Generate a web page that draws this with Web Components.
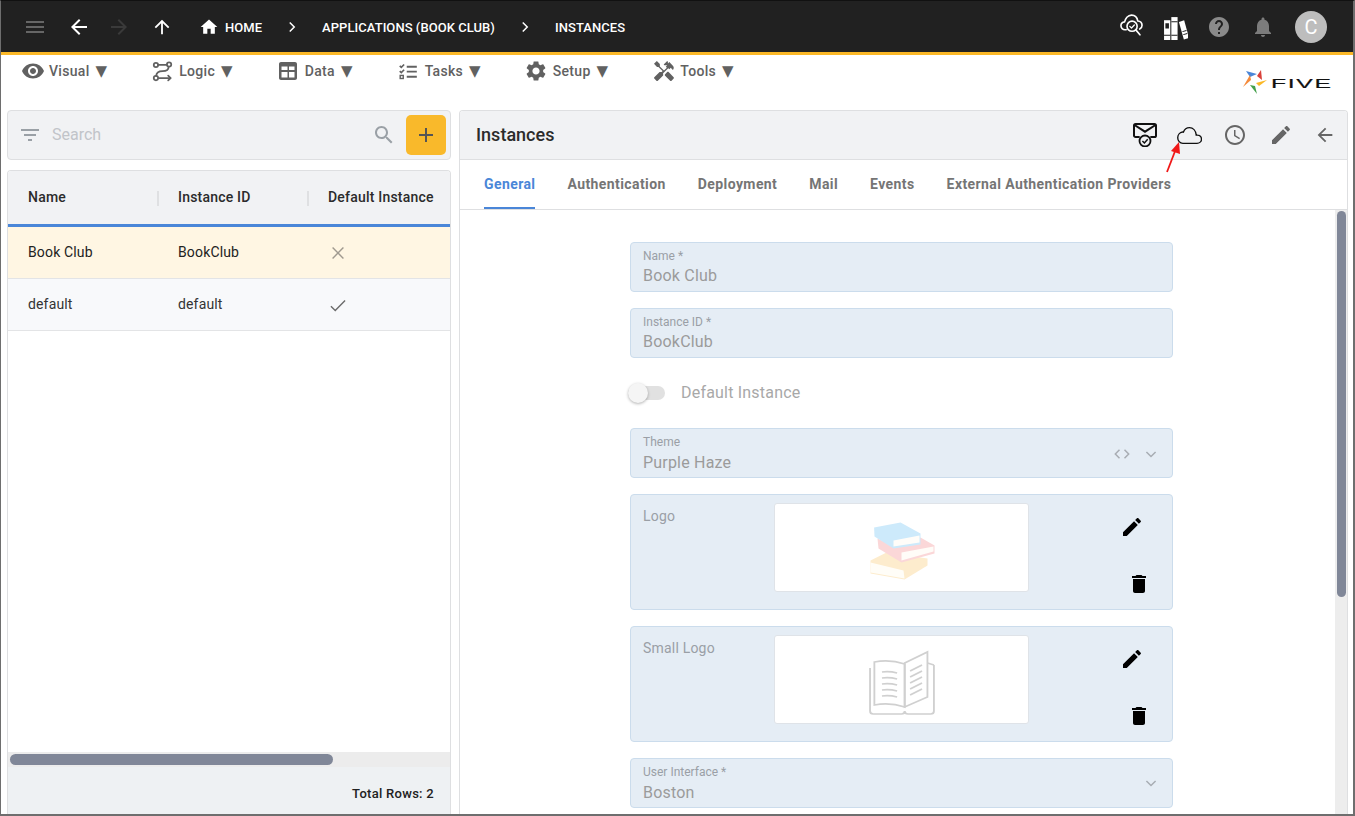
<!DOCTYPE html>
<html lang="en">
<head>
<meta charset="utf-8">
<title>Instances</title>
<style>
html,body{margin:0;padding:0;height:100%;overflow:hidden;background:#fff;font-family:Roboto,"Liberation Sans",sans-serif}
</style>
</head>
<body>
<five-app>
  <five-topbar slot="top">
    <five-crumb slot="crumbs" home>HOME</five-crumb>
    <five-crumb slot="crumbs" sep>APPLICATIONS (BOOK CLUB)</five-crumb>
    <five-crumb slot="crumbs" sep>INSTANCES</five-crumb>
  </five-topbar>
  <five-menubar slot="menu">
    <five-menu-item icon="eye" isize="24">Visual</five-menu-item>
    <five-menu-item icon="logic">Logic</five-menu-item>
    <five-menu-item icon="table" isize="24">Data</five-menu-item>
    <five-menu-item icon="tasks">Tasks</five-menu-item>
    <five-menu-item icon="gear" isize="24">Setup</five-menu-item>
    <five-menu-item icon="tools" isize="24">Tools</five-menu-item>
  </five-menubar>
  <five-search slot="left"></five-search>
  <five-grid slot="left">
    <five-grid-row selected name="Book Club" iid="BookClub" mark="close"></five-grid-row>
    <five-grid-row name="default" iid="default" mark="check"></five-grid-row>
  </five-grid>
  <five-detail slot="right" heading="Instances">
    <five-tab slot="tabs" active>General</five-tab>
    <five-tab slot="tabs">Authentication</five-tab>
    <five-tab slot="tabs">Deployment</five-tab>
    <five-tab slot="tabs">Mail</five-tab>
    <five-tab slot="tabs">Events</five-tab>
    <five-tab slot="tabs">External Authentication Providers</five-tab>
    <five-field label="Name *" value="Book Club"></five-field>
    <five-field label="Instance ID *" value="BookClub"></five-field>
    <five-toggle>Default Instance</five-toggle>
    <five-field label="Theme" value="Purple Haze" code select></five-field>
    <five-image-field label="Logo" art="books"></five-image-field>
    <five-image-field label="Small Logo" art="open"></five-image-field>
    <five-field label="User Interface *" value="Boston" select></five-field>
  </five-detail>
</five-app>
<script>
const ICONS={
 menu:'<path d="M3 18h18v-2H3v2zm0-5h18v-2H3v2zm0-7v2h18V6H3z"/>',
 back:'<path d="M20 11H7.83l5.59-5.59L12 4l-8 8 8 8 1.41-1.41L7.83 13H20v-2z"/>',
 forward:'<path d="M12 4l-1.41 1.41L16.17 11H4v2h12.17l-5.58 5.59L12 20l8-8z"/>',
 up:'<path d="M4 12l1.41 1.41L11 7.83V20h2V7.83l5.58 5.59L20 12l-8-8-8 8z"/>',
 home:'<path d="M10 20v-6h4v6h5v-8h3L12 3 2 12h3v8z"/>',
 chevron:'<path d="M9 6l6 6-6 6" fill="none" stroke="currentColor" stroke-width="2"/>',
 help:'<path d="M12 2C6.48 2 2 6.48 2 12s4.48 10 10 10 10-4.48 10-10S17.52 2 12 2zm1 17h-2v-2h2v2zm2.07-7.75l-.9.92C13.45 12.9 13 13.5 13 15h-2v-.5c0-1.1.45-2.1 1.17-2.83l1.24-1.26c.37-.36.59-.86.59-1.41 0-1.1-.9-2-2-2s-2 .9-2 2H8c0-2.21 1.79-4 4-4s4 1.79 4 4c0 .88-.36 1.68-.93 2.25z"/>',
 bell:'<path d="M12 22c1.1 0 2-.9 2-2h-4c0 1.1.89 2 2 2zm6-6v-5c0-3.07-1.64-5.64-4.5-6.32V4c0-.83-.67-1.5-1.5-1.5s-1.5.67-1.5 1.5v.68C7.63 5.36 6 7.92 6 11v5l-2 2v1h16v-1l-2-2z"/>',
 cloudsearch:'<g fill="none" stroke="currentColor" stroke-width="1.7" stroke-linecap="round" stroke-linejoin="round"><path d="M6.5 17.5H5.2C2.9 17.5 1 15.7 1 13.4c0-2.2 1.7-3.9 3.8-4.1C5.6 6.2 8.1 2.2 12 2.2c3.600 0 6 2.700 6.500 6.100 2.500.200 4.500 2.100 4.500 4.600 0 1.700-1 3.200-2.400 3.900"/><circle cx="12.600" cy="13.800" r="5.300"/><path d="M16.500 17.600l4.300 5.200"/><path d="M10.200 13.900l1.800 1.800 3-3.200" stroke-width="1.300"/></g>',
 booksrow:'<g fill="currentColor"><path d="M1 5h6v19H1z"/><path d="M8 2h6v22H8z"/><path d="M15.300 6.600l5-1.500 4.700 17-5 1.500z"/></g><g fill="#212121"><path d="M2.300 8h3.400v5H2.300zM1 19h6v.9H1zM8 6h6v.9H8zM8 19h6v.9H8z"/><path d="M18.500 15.500l3.900-1.100.3.900-3.900 1.100zM19.300 18.400l3.900-1.100.3.900-3.900 1.100z"/></g>',
 eye:'<path d="M12 4.500C7 4.500 2.730 7.610 1 12c1.730 4.390 6 7.500 11 7.500s9.270-3.110 11-7.500c-1.730-4.390-6-7.500-11-7.500zM12 17c-2.760 0-5-2.240-5-5s2.240-5 5-5 5 2.240 5 5-2.240 5-5 5zm0-8c-1.660 0-3 1.340-3 3s1.340 3 3 3 3-1.340 3-3-1.340-3-3-3z"/>',
 logic:'<g fill="none" stroke="currentColor" stroke-width="2" stroke-linecap="round" stroke-linejoin="round"><circle cx="4.500" cy="4.500" r="2.500"/><circle cx="19.500" cy="4" r="2.500"/><circle cx="4.500" cy="19.500" r="2.500"/><path d="M7 4.500h10"/><path d="M19 6.500C19 10 16 11.500 12 11.500S5 13 4.800 17"/><path d="M8 19.500h13"/><path d="M18.500 16.800l2.800 2.700-2.800 2.700"/></g>',
 table:'<path fill-rule="evenodd" d="M5 3h14c1.100 0 2 .9 2 2v14c0 1.100-.9 2-2 2H5c-1.100 0-2-.9-2-2V5c0-1.100.9-2 2-2zm.5 8h6V7.500h-6zm7.500 0h5.500V7.500H13zM5.500 18.500h6V13h-6zm7.500 0h5.500V13H13z"/>',
 tasks:'<path d="M10 5.500h11.500v2.200H10zM10 11h11.500v2.200H10zM10 16.800h11.500V19H10z"/><path d="M2 5.500l1.800 1.800L7 4" fill="none" stroke="currentColor" stroke-width="1.900"/><path d="M2 11.500l1.800 1.800L7 10" fill="none" stroke="currentColor" stroke-width="1.900"/><rect x="2.500" y="16.500" width="3.500" height="3.500" fill="none" stroke="currentColor" stroke-width="1.600"/>',
 gear:'<path d="M19.140 12.940c.04-.3.060-.61.060-.94 0-.32-.02-.64-.07-.94l2.030-1.580c.18-.14.23-.41.120-.61l-1.920-3.320c-.12-.22-.37-.29-.59-.22l-2.390.96c-.5-.38-1.030-.7-1.620-.94l-.36-2.540c-.04-.24-.24-.41-.48-.41h-3.840c-.24 0-.43.17-.47.41l-.36 2.540c-.59.24-1.130.57-1.620.94l-2.390-.96c-.22-.08-.47 0-.59.22L2.740 8.870c-.12.21-.08.47.12.61l2.030 1.580c-.05.3-.09.63-.09.94s.02.64.07.94l-2.030 1.580c-.18.14-.23.41-.12.61l1.920 3.320c.12.22.37.29.59.22l2.390-.96c.5.38 1.030.7 1.620.94l.36 2.54c.05.24.24.41.48.41h3.840c.24 0 .44-.17.47-.41l.36-2.54c.59-.24 1.130-.56 1.620-.94l2.390.96c.22.08.47 0 .59-.22l1.920-3.320c.12-.22.07-.47-.12-.61l-2.010-1.580zM12 15.600c-1.980 0-3.600-1.620-3.600-3.600s1.620-3.600 3.600-3.600 3.600 1.620 3.600 3.600-1.620 3.600-3.600 3.600z"/>',
 tools:'<path d="M21.670 18.170l-5.300-5.300h-.99l-2.540 2.540v.99l5.300 5.300c.39.39 1.020.39 1.410 0l2.120-2.120c.39-.38.39-1.020 0-1.410z"/><path d="M17.340 10.190l1.410-1.410 2.120 2.120c1.170-1.170 1.170-3.070 0-4.240l-3.540-3.540-1.410 1.410V2.710l-.7-.71-3.540 3.540.71.71h2.830l-1.410 1.410 1.060 1.060-2.890 2.890-4.130-4.130V5.060L4.830 2.040 2 4.870 5.030 7.900h1.410l4.130 4.130-.85.850H7.600l-5.300 5.300c-.39.39-.39 1.020 0 1.410l2.120 2.120c.39.39 1.020.39 1.410 0l5.300-5.300v-2.120l5.150-5.150 1.060 1.050z"/>',
 filter:'<path d="M10 18h4v-2h-4v2zM3 6v2h18V6H3zm3 7h12v-2H6v2z"/>',
 search:'<path d="M15.500 14h-.79l-.28-.27C15.410 12.590 16 11.110 16 9.500 16 5.910 13.090 3 9.500 3S3 5.910 3 9.500 5.910 16 9.500 16c1.610 0 3.090-.59 4.230-1.570l.27.28v.79l5 4.990L20.490 19l-4.990-5zm-6 0C7.010 14 5 11.990 5 9.500S7.010 5 9.500 5 14 7.010 14 9.500 11.990 14 9.500 14z"/>',
 add:'<path d="M19 13h-6v6h-2v-6H5v-2h6V5h2v6h6v2z"/>',
 close:'<path d="M5.500 5.500l13 13M18.500 5.500l-13 13" fill="none" stroke="currentColor" stroke-width="1.700"/>',
 check:'<path d="M3.500 13.500l5.200 5L20.500 6.500" fill="none" stroke="currentColor" stroke-width="1.700"/>',
 edit:'<path d="M3 17.250V21h3.750L17.810 9.940l-3.750-3.750L3 17.250zM20.710 7.040c.39-.39.39-1.020 0-1.410l-2.340-2.340c-.39-.39-1.020-.39-1.410 0l-1.830 1.830 3.750 3.750 1.830-1.830z"/>',
 trash:'<path d="M6 19c0 1.100.9 2 2 2h8c1.100 0 2-.9 2-2V7H6v12zM19 4h-3.500l-1-1h-5l-1 1H5v2h14V4z"/>',
 clock:'<path d="M11.990 2C6.470 2 2 6.480 2 12s4.470 10 9.990 10C17.520 22 22 17.520 22 12S17.520 2 11.990 2zM12 20c-4.420 0-8-3.580-8-8s3.580-8 8-8 8 3.580 8 8-3.580 8-8 8zm.5-13H11v6l5.250 3.150.75-1.230-4.500-2.670z"/>',
 cloud:'<path d="M5.600 19.500h13.600c2.400 0 4.300-1.800 4.300-4 0-2.100-1.700-3.800-3.900-3.900-.4-.1-.8-.1-1.100 0C18 7.500 15.400 4.500 12 4.500c-2.700 0-4.900 1.700-5.800 4.200-.3-.1-.6-.1-.9-.1C2.800 9 .7 11.300.7 14.100c0 3 2.100 5.400 4.900 5.400z" fill="none" stroke="currentColor" stroke-width="1.300"/>',
 mailcheck:'<g fill="none" stroke="currentColor"><path d="M6.700 14H2.600c-.9 0-1.600-.7-1.600-1.600V2.600C1 1.700 1.700 1 2.600 1h18.800c.9 0 1.600.7 1.600 1.600v9.800c0 .9-.7 1.600-1.600 1.600h-4.100" stroke-width="2"/><path d="M1.500 2L12 8.700 22.500 2" stroke-width="2"/><circle cx="12" cy="18" r="5.500" stroke-width="1.800"/><path d="M9.400 18l2 2 3.300-3.700" stroke-width="1.500"/></g>',
 expand:'<path d="M6.500 9.500l5.500 5.500 5.500-5.500" fill="none" stroke="currentColor" stroke-width="1.800"/>',
 code:'<path d="M9 7l-5 5 5 5M15 7l5 5-5 5" fill="none" stroke="currentColor" stroke-width="1.800"/>'
};
function def(tag,css,html,init){
  const t=document.createElement('template');
  t.innerHTML=`<style>${css}</style>${html}`;
  customElements.define(tag,class extends HTMLElement{
    constructor(){super();this.attachShadow({mode:'open'}).appendChild(t.content.cloneNode(true));}
    connectedCallback(){ if(init&&!this._i){this._i=1;init.call(this,this.shadowRoot);} }
  });
}
def('five-icon',':host{display:inline-flex;flex:none;line-height:0}svg{display:block;fill:currentColor}','<svg viewBox="0 0 24 24"></svg>',function(r){
  const s=this.getAttribute('size')||24,v=r.querySelector('svg');
  v.setAttribute('width',s);v.setAttribute('height',s);v.innerHTML=ICONS[this.getAttribute('name')]||'';
});
def('five-app',`:host{display:flex;flex-direction:column;box-sizing:border-box;width:1355px;height:816px;overflow:hidden;background:#fff;
  border-top:1px solid #111;border-left:1px solid #6e6e6e;border-right:2px solid #6e6e6e;border-bottom:2px solid #6e6e6e}
  .main{flex:1;min-height:0;display:grid;grid-template-columns:444px 889px;column-gap:8px;padding:0 5px 0 6px}
  .col{display:flex;flex-direction:column;gap:10px;min-height:0}`,
  `<slot name="top"></slot><slot name="menu"></slot><div class="main"><div class="col"><slot name="left"></slot></div><slot name="right"></slot></div>`);
def('five-topbar',`:host{display:flex;align-items:center;flex:none;box-sizing:content-box;height:50px;background:#212121;border-bottom:3px solid #fbb827;color:#fff;padding:1px 26px 0 12px}
  .b{display:flex;align-items:center;justify-content:center;height:50px}
  .crumbs{display:flex;align-items:center;margin-left:12px}
  .sp{flex:1}
  .av{width:32px;height:32px;border-radius:50%;background:#bdbdbd;color:#fff;font:400 20px Roboto,sans-serif;display:flex;align-items:center;justify-content:center;margin-left:10px}`,
  `<div class="b" style="width:44px;color:#666"><five-icon name="menu"></five-icon></div>
   <div class="b" style="width:44px"><five-icon name="back"></five-icon></div>
   <div class="b" style="width:36px;color:#3a3a3a"><five-icon name="forward"></five-icon></div>
   <div class="b" style="width:50px"><five-icon name="up" size="22"></five-icon></div>
   <div class="crumbs"><slot name="crumbs"></slot></div><div class="sp"></div>
   <div class="b" style="width:43px;margin-top:-5px"><five-icon name="cloudsearch" size="23"></five-icon></div>
   <div class="b" style="width:44px"><five-icon name="booksrow" size="25"></five-icon></div>
   <div class="b" style="width:44px;color:#8a8a8a"><five-icon name="help"></five-icon></div>
   <div class="b" style="width:44px;color:#7c7c7c"><five-icon name="bell"></five-icon></div>
   <div class="av">C</div>`);
def('five-crumb',`:host{display:flex;align-items:center;font:500 13px Roboto,sans-serif;letter-spacing:.05px;color:#fff;white-space:nowrap}
  .s{display:flex;justify-content:center;width:60px}.h{margin-right:6px;display:flex}[hidden]{display:none}`,
  `<span class="s" id="s"><five-icon name="chevron" size="18"></five-icon></span><span class="h" id="h"><five-icon name="home" size="20"></five-icon></span><slot></slot>`,
  function(r){ if(!this.hasAttribute('sep'))r.getElementById('s').hidden=true; if(!this.hasAttribute('home'))r.getElementById('h').hidden=true; });
def('five-menubar',`:host{display:flex;position:relative;flex:none;height:55px;box-sizing:border-box;padding:4px 0 0 21px;align-items:flex-start}
  .items{display:flex;gap:45.2px}
  five-logo{position:absolute;right:21px;top:15px}`,
  `<div class="items"><slot></slot></div><five-logo></five-logo>`);
def('five-menu-item',`:host{display:flex;align-items:center;gap:6px;height:24px;font:500 14px Roboto,"Liberation Sans",sans-serif;letter-spacing:.3px;color:#616161;white-space:nowrap}
  .i{width:21px;display:flex;justify-content:center}
  .tri{font:400 15px "DejaVu Sans",sans-serif;letter-spacing:0;line-height:1}`,
  `<span class="i" id="i"></span><slot></slot><span class="tri">▼</span>`,
  function(r){r.getElementById('i').innerHTML=`<five-icon name="${this.getAttribute('icon')}" size="${this.getAttribute('isize')||21}"></five-icon>`;});
def('five-logo',`:host{display:flex;align-items:center;gap:2px;width:89px;height:25px}
  .t{font:400 15px "Liberation Sans",Arial,sans-serif;letter-spacing:1px;color:#111;transform:translateY(1px) scale(1.65,.88);transform-origin:left center;-webkit-text-stroke:.2px #111;line-height:1}`,
  `<svg width="26" height="25" viewBox="0 0 26 25" style="flex:none"><polygon points="3,1 14,4 7,7" fill="#4a86d8"/><polygon points="18,0 19,10 14,6" fill="#d9413a"/><polygon points="24,10 16,16 13,13" fill="#fbb827"/><polygon points="14,24 7,15 12,16" fill="#43a04b"/><polygon points="0,17 7,5 8,10" fill="#f58b3b"/></svg><span class="t">FIVE</span>`);
def('five-search',`:host{display:flex;align-items:center;flex:none;box-sizing:border-box;height:50px;background:#f1f2f4;border:1px solid #dedfe1;border-radius:4px;padding:0 4px 0 10px;color:#9aa0a6}
  .p{margin:-2px 0 0 10px;flex:1;font:400 16px Roboto,sans-serif;color:#c1c4c9}
  .btn{width:40px;height:40px;border-radius:5px;background:#f9b92b;color:#555;display:flex;align-items:center;justify-content:center;margin-left:10px}`,
  `<five-icon name="filter"></five-icon><span class="p">Search</span><five-icon name="search"></five-icon><div class="btn"><five-icon name="add"></five-icon></div>`);
def('five-grid',`:host{display:flex;flex-direction:column;flex:1;min-height:0;box-sizing:border-box;border:1px solid #dedfe1;border-bottom:0;border-radius:4px 4px 0 0;overflow:hidden;background:#fff}
  .head{display:grid;grid-template-columns:150px 150px 150px;height:51px;padding-bottom:2px;background:#f1f2f4;border-bottom:3px solid #4a86d8;align-items:center;font:500 14px Roboto,sans-serif;letter-spacing:.2px;color:#2b2b2b;white-space:nowrap}
  .head div{padding-left:20px;position:relative}
  .head div+div::before{content:"";position:absolute;left:-1px;top:2px;width:2px;height:15px;background:#dfe0e2}
  .body{flex:1}
  .track{height:15px;background:#ececec;display:flex;align-items:center;padding-left:2px}
  .thumb{width:323px;height:11px;border-radius:6px;background:#808798}
  .foot{height:41px;padding:6px 16px 0 0;background:#eef1f3;display:flex;align-items:center;justify-content:flex-end;font:500 13px Roboto,sans-serif;letter-spacing:.28px;color:#212121}`,
  `<div class="head"><div>Name</div><div>Instance ID</div><div>Default Instance</div></div>
   <div class="body"><slot></slot></div><div class="track"><div class="thumb"></div></div><div class="foot">Total Rows: 2</div>`);
def('five-grid-row',`:host{display:grid;grid-template-columns:150px 150px 150px;align-items:center;height:52px;padding-bottom:2px;box-sizing:border-box;border-bottom:1px solid #e3e4e6;background:#f8f9fb;font:400 14px Roboto,sans-serif;letter-spacing:.15px;color:#333}
  :host([selected]){background:#fff6e3;color:#222}
  div{padding-left:20px;display:flex}.mk{color:#6b6b6b;margin-top:2px}:host([selected]) .mk{color:#a09a90}`,
  `<div id="a"></div><div id="b"></div><div class="mk" id="m"></div>`,
  function(r){r.getElementById('a').textContent=this.getAttribute('name');r.getElementById('b').textContent=this.getAttribute('iid');r.getElementById('m').innerHTML=`<five-icon name="${this.getAttribute('mark')}" size="20"></five-icon>`;});
def('five-detail',`:host{display:flex;flex-direction:column;position:relative;box-sizing:border-box;min-height:0;border:1px solid #dedfe1;border-bottom:0;border-radius:4px 4px 0 0;overflow:hidden;background:#fff}
  .hd{display:flex;align-items:center;height:48px;flex:none;background:#f1f2f4;border-bottom:1px solid #dedfe1;padding:0 1px 0 16px;color:#666}
  h1{margin:-2px 0 0;flex:1;font:500 18px Roboto,sans-serif;color:#2b2b2b}
  .a{display:flex;justify-content:center;width:46px}
  .tabs{display:flex;flex:none;height:50px;box-sizing:border-box;border-bottom:1px solid #dedfe1;padding-left:8px}
  .wrap{flex:1;display:flex;min-height:0}
  .form{flex:1;display:flex;flex-direction:column;gap:16px;padding:32px 162px 0 170px;overflow:hidden}
  .sb{width:12px;flex:none;background:#ededed;padding:1px 1px 0 2px;box-sizing:border-box}
  .th{height:386px;border-radius:5px;background:#808798}
  .arrow{position:absolute;left:700px;top:30px}`,
  `<div class="hd"><h1 id="t"></h1>
    <span class="a" style="color:#111;margin-right:-2px"><five-icon name="mailcheck"></five-icon></span>
    <span class="a" style="color:#111"><five-icon name="cloud" size="25"></five-icon></span>
    <span class="a"><five-icon name="clock"></five-icon></span>
    <span class="a"><five-icon name="edit"></five-icon></span>
    <span class="a" style="width:42px"><five-icon name="back" size="22"></five-icon></span></div>
   <div class="tabs"><slot name="tabs"></slot></div>
   <div class="wrap"><div class="form"><slot></slot></div><div class="sb"><div class="th"></div></div></div>
   <svg class="arrow" width="20" height="34" viewBox="0 0 20 34"><path d="M7 31L15.500 9" stroke="#f01818" stroke-width="1.800" fill="none"/><polygon points="19,1 20,13 11,10" fill="#f01818"/></svg>`,
  function(r){r.getElementById('t').textContent=this.getAttribute('heading');});
def('five-tab',`:host{display:flex;align-items:center;box-sizing:border-box;height:49px;padding:0 16px 2px;position:relative;font:700 14px Roboto,sans-serif;letter-spacing:.41px;color:#757575;white-space:nowrap}
  :host([active]){color:#4a86d8}
  :host([active])::after{content:"";position:absolute;left:16px;right:16px;bottom:0;height:2px;background:#4a86d8}`,`<slot></slot>`);
def('five-field',`:host{display:flex;align-items:center;flex:none;box-sizing:border-box;height:50px;background:#e5edf5;border:1px solid #cbdcec;border-radius:4px;padding:0 11px 0 12px;font-family:Roboto,sans-serif}
  .c{flex:1;display:flex;flex-direction:column;align-self:flex-start;padding-top:6px}
  .l{font-size:12px;line-height:14px;color:#9a9fa6}
  .v{font-size:16px;line-height:20px;color:#9b9b9b;letter-spacing:.2px;margin-top:3px}
  :host([select]) .v{margin-top:4px}
  :host([code]) .e{margin-top:2px}
  five-icon{color:#a8adb3}.e{display:flex;gap:9px;align-items:center}`,
  `<div class="c"><div class="l" id="l"></div><div class="v" id="v"></div></div><div class="e" id="e"></div>`,
  function(r){r.getElementById('l').textContent=this.getAttribute('label');r.getElementById('v').textContent=this.getAttribute('value');
    let h='';if(this.hasAttribute('code'))h+='<five-icon name="code" size="20"></five-icon>';if(this.hasAttribute('select'))h+='<five-icon name="expand" size="20"></five-icon>';
    r.getElementById('e').innerHTML=h;});
def('five-toggle',`:host{display:flex;align-items:center;flex:none;height:38px;font:400 16px Roboto,sans-serif;letter-spacing:.2px;color:#a8a8a8;margin-left:-2px}
  .sw{position:relative;width:37px;height:14px;border-radius:7px;background:#e1e1e1;margin-right:16px}
  .k{position:absolute;left:0;top:-3px;width:20px;height:20px;border-radius:50%;background:#f5f5f5;box-shadow:0 1px 3px rgba(0,0,0,.3)}
  .t{margin-top:-2px}`,
  `<div class="sw"><div class="k"></div></div><span class="t"><slot></slot></span>`);
def('five-image-field',`:host{display:flex;flex:none;box-sizing:border-box;height:116px;background:#e5edf5;border:1px solid #cbdcec;border-radius:4px;font-family:Roboto,sans-serif}
  .l{width:143px;box-sizing:border-box;padding:12px 0 0 12px;font-size:14px;line-height:18px;letter-spacing:.2px;color:#9a9fa6}
  .img{width:255px;height:89px;margin-top:8px;box-sizing:border-box;background:#fff;border:1px solid #dfe3e8;border-radius:3px;display:flex;align-items:center;justify-content:center}
  .ac{display:flex;flex-direction:column;justify-content:space-between;padding:20px 0 13px 91px;color:#000}
  .ac five-icon+five-icon{margin-left:7px}`,
  `<div class="l" id="l"></div><div class="img" id="i"></div><div class="ac"><five-icon name="edit"></five-icon><five-icon name="trash"></five-icon></div>`,
  function(r){r.getElementById('l').textContent=this.getAttribute('label');
    r.getElementById('i').innerHTML=this.getAttribute('art')==='books'
    ?`<svg width="100" height="70" viewBox="1.500 -2.500 100 70">
       <path d="M20 45L36 37L77 43L77 50L54 64L20 58Z" fill="#fdeccd"/><path d="M20 47L53 55L54 63L20 57Z" fill="#fffdf7"/>
       <path d="M27 23L43 31L70 22L84 30L84 38L51 47L28 33Z" fill="#fbd7d8"/><path d="M51 37L83 31L83 36L51 45Z" fill="#fffcf8"/>
       <path d="M23.600 12L50 7L70 18L70 29L43 33L24 21Z" fill="#cdeafb"/><path d="M43 25L69 20L69 27L43 31Z" fill="#fffdf9"/></svg>`
    :`<svg width="85" height="75" viewBox="-0.200 -3 78.500 75" preserveAspectRatio="none" fill="none" stroke="#d0d0d0" stroke-width="1.700">
       <path d="M14 17Q28 14 42 19V62Q28 57 14 60Z"/><path d="M42 18L63 7V52L42 62Z"/>
       <path d="M10 23V66Q10 69 13 69H39Q42 69 42 66Q42 69 45 69H66Q69 69 69 66V20"/><path d="M63 18L69 20"/>
       <path d="M21 27Q28 26 35 28M21 33Q28 32 35 34M21 39Q28 38 35 40M21 45Q28 44 35 46M21 51Q28 50 35 52"/>
       <path d="M47 26L58 20M47 32L58 26M47 38L58 32M47 44L58 38M47 50L58 44"/></svg>`;});
</script>
</body>
</html>
